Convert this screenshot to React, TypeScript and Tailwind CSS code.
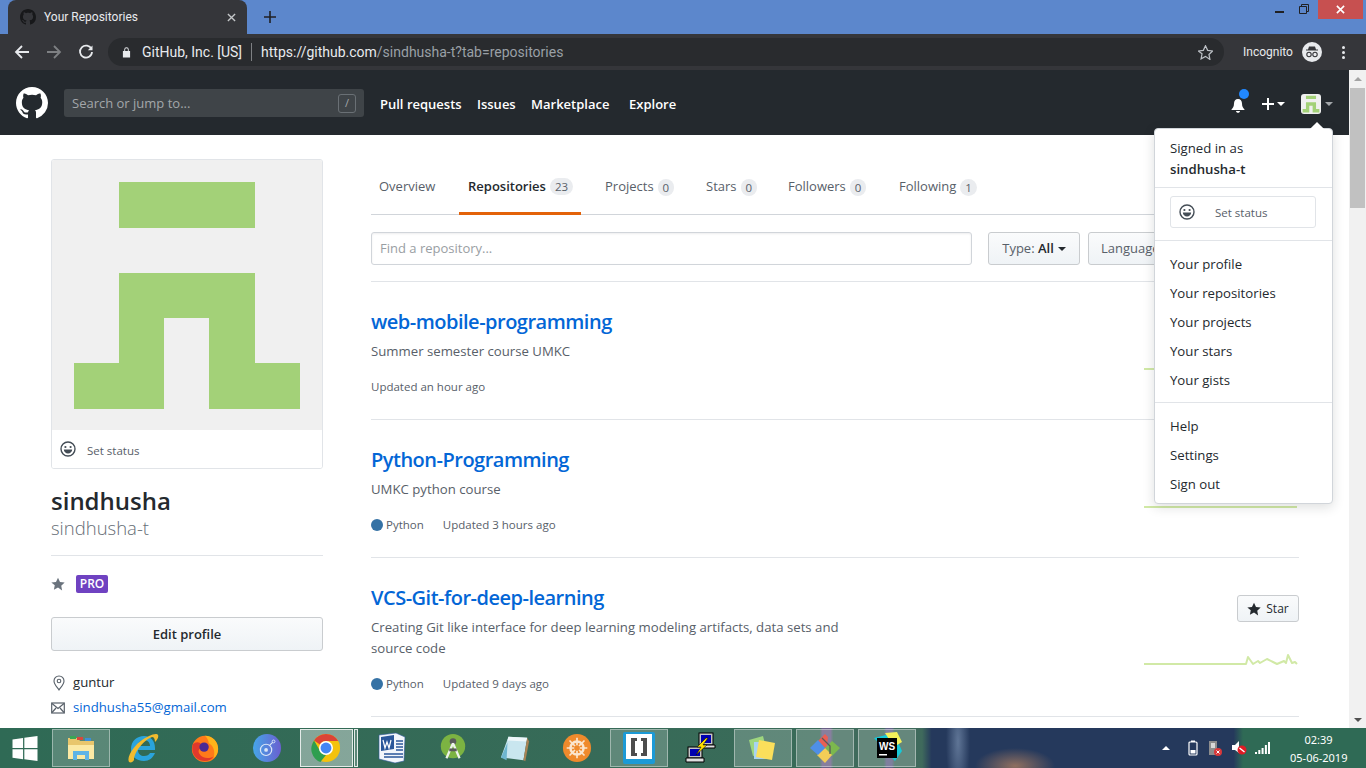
import type { ReactNode } from "react";

const githubMark =
  "M8 0C3.58 0 0 3.58 0 8c0 3.54 2.29 6.53 5.47 7.59.4.07.55-.17.55-.38 0-.19-.01-.82-.01-1.49-2.01.37-2.53-.49-2.69-.94-.09-.23-.48-.94-.82-1.13-.28-.15-.68-.52-.01-.53.63-.01 1.08.58 1.23.82.72 1.21 1.87.87 2.33.66.07-.52.28-.87.51-1.07-1.78-.2-3.64-.89-3.64-3.95 0-.87.31-1.59.82-2.15-.08-.2-.36-1.02.08-2.12 0 0 .67-.21 2.2.82.64-.18 1.32-.27 2-.27.68 0 1.36.09 2 .27 1.53-1.04 2.2-.82 2.2-.82.44 1.1.16 1.92.08 2.12.51.56.82 1.27.82 2.15 0 3.07-1.87 3.75-3.65 3.95.29.25.54.73.54 1.48 0 1.07-.01 1.93-.01 2.2 0 .21.15.46.55.38A8.013 8.013 0 0016 8c0-4.42-3.58-8-8-8z";
const starPath = "M8 .8l2.3 4.9 5.3.7-3.9 3.7 1 5.3L8 12.1l-4.7 2.6 1-5.3L.4 6.4l5.3-.7z";

const GithubMark = ({ className, fill }: { className: string; fill: string }) => (
  <svg viewBox="0 0 16 16" className={className} fill={fill}>
    <path d={githubMark} />
  </svg>
);

const Smiley = ({ className }: { className: string }) => (
  <svg viewBox="0 0 16 16" className={className} fill="none">
    <circle cx="8" cy="8" r="7" stroke="#444d56" strokeWidth="1.4" />
    <circle cx="5.4" cy="6" r="1.1" fill="#444d56" />
    <circle cx="10.6" cy="6" r="1.1" fill="#444d56" />
    <path d="M3.8 8.6h8.4c0 2.4-1.9 3.9-4.2 3.9S3.8 11 3.8 8.6z" fill="#444d56" />
  </svg>
);

const Caret = ({ className }: { className: string }) => (
  <span className={`inline-block w-0 h-0 border-x-[4px] border-x-transparent border-t-[4px] ${className}`} />
);

const Avatar = ({ className }: { className: string }) => (
  <svg viewBox="1 0 270 270" className={className}>
    <rect x="1" width="270" height="270" fill="#f0f0f0" />
    <path
      d="M68 22h136v46H68zM68 113h136v90h45v46h-91v-91h-45v91H23v-46h45z"
      fill="#a3d178"
    />
  </svg>
);

const Sparkline = ({ points, className }: { points: string; className: string }) => (
  <svg viewBox="0 0 155 24" className={`w-[155px] h-[24px] ${className}`} fill="none">
    <polyline points={points} stroke="#d1e9a6" strokeWidth="2" strokeLinejoin="round" />
  </svg>
);

const StarButton = () => (
  <button className="w-[62px] h-[27px] flex items-center justify-center gap-[5px] text-[12px] font-medium text-[#24292e] rounded-[3px] border border-[#c9cccf] bg-gradient-to-b from-[#fafbfc] to-[#eff3f6]">
    <svg viewBox="0 0 16 16" className="w-[14px] h-[14px]" fill="#24292e">
      <path d={starPath} />
    </svg>
    Star
  </button>
);

const tabs = [
  { label: "Overview", width: "w-[73px] pl-[8px]" },
  { label: "Repositories", count: "23", width: "w-[122px] pl-[9px]", active: true },
  { label: "Projects", count: "0", width: "w-[86px] pl-[9px]" },
  { label: "Stars", count: "0", width: "w-[67px] pl-[9px]" },
  { label: "Followers", count: "0", width: "w-[96px] pl-[9px]" },
  { label: "Following", count: "1", width: "w-[96px] pl-[9px]" },
];

const repos = [
  {
    name: "web-mobile-programming",
    desc: ["Summer semester course UMKC"],
    updated: "Updated an hour ago",
    sparkClass: "mt-[1px]",
    points: "0,22 153,22",
  },
  {
    name: "Python-Programming",
    desc: ["UMKC python course"],
    lang: true,
    updated: "Updated 3 hours ago",
    sparkClass: "mt-[1px]",
    points: "0,22 153,22",
  },
  {
    name: "VCS-Git-for-deep-learning",
    desc: [
      "Creating Git like interface for deep learning modeling artifacts, data sets and",
      "source code",
    ],
    lang: true,
    updated: "Updated 9 days ago",
    sparkClass: "mt-[20px]",
    points:
      "0,22 102,22 104,15 109,22 114,19 116,21 123,17 129,20 133,22 140,19 142,21 144,13 148,21 151,20 153,22",
  },
];

const RepoRow = ({ repo }: { repo: (typeof repos)[number] }) => (
  <div className="flex justify-between border-b border-[#e1e4e8] pt-[27px] pb-[23px]">
    <div>
      <div className="text-[20px] leading-[26px] font-semibold text-[#0366d6] tracking-[-0.025em]">
        {repo.name}
      </div>
      <div className="mt-[6px] text-[13.2px] leading-[21px] text-[#586069]">
        {repo.desc.map((line) => (
          <div key={line}>{line}</div>
        ))}
      </div>
      <div className="mt-[16px] flex items-center text-[11.5px] leading-[18px] text-[#586069]">
        {repo.lang && (
          <span className="flex items-center mr-[19px]">
            <span className="w-[12px] h-[12px] rounded-full bg-[#3572a5] mr-[3px]" />
            Python
          </span>
        )}
        {repo.updated}
      </div>
    </div>
    <div className="flex flex-col items-end pt-[10px]">
      <StarButton />
      <Sparkline points={repo.points} className={repo.sparkClass} />
    </div>
  </div>
);

const Sidebar = () => (
  <aside className="w-[272px] shrink-0 -mt-[1px]">
    <div className="rounded-[3px] border border-[#e1e4e8] overflow-hidden">
      <Avatar className="block w-full h-[270px]" />
      <div className="h-[38px] flex items-center px-[8px] pt-[3px] text-[11.5px] text-[#586069] bg-white">
        <Smiley className="w-[16px] h-[16px] mr-[11px] -mt-[3px]" />
        Set status
      </div>
    </div>
    <div className="mt-[17px] text-[24px] leading-[30px] font-semibold text-[#24292e]">sindhusha</div>
    <div className="text-[18.5px] leading-[24px] font-light text-[#666e76]">sindhusha-t</div>
    <div className="mt-[15px] border-t border-[#e1e4e8]" />
    <div className="mt-[19px] h-[18px] flex items-center">
      <svg viewBox="0 0 16 16" className="w-[14px] h-[14px]" fill="#6a737d">
        <path d={starPath} />
      </svg>
      <span className="ml-[11px] w-[32px] h-[18px] flex items-center justify-center rounded-[2px] bg-[#6f42c1] text-white text-[12px] font-semibold">
        PRO
      </span>
    </div>
    <button className="mt-[24px] w-full h-[34px] pt-[1px] text-[13px] font-semibold text-[#24292e] rounded-[3px] border border-[#c9cccf] bg-gradient-to-b from-[#fafbfc] to-[#eff3f6]">
      Edit profile
    </button>
    <div className="mt-[22px] flex items-center h-[20px] text-[13.2px] text-[#24292e]">
      <svg viewBox="0 0 12 16" className="w-[12px] h-[16px] ml-[2px] mr-[8px]" fill="none" stroke="#586069" strokeWidth="1.1">
        <path d="M6 1C3.2 1 1 3.2 1 6c0 3.2 3 6 5 9 2-3 5-5.8 5-9 0-2.8-2.2-5-5-5z" />
        <circle cx="6" cy="6" r="1.8" />
      </svg>
      guntur
    </div>
    <div className="mt-[5px] flex items-center h-[20px] text-[13.2px] text-[#0366d6]">
      <svg viewBox="0 0 14 12" className="w-[14px] h-[12px] mr-[8px]" fill="none" stroke="#586069" strokeWidth="1.2">
        <rect x="0.7" y="1" width="12.6" height="10" />
        <path d="M1 1.5l6 5 6-5M1 10.5l4-4.5M13 10.5L9 6" />
      </svg>
      sindhusha55@gmail.com
    </div>
  </aside>
);

const RepoList = () => (
  <section className="ml-[48px] w-[928px]">
    <nav className="flex h-[55px] border-b border-[#d1d5da] text-[13px] text-[#586069]">
      {tabs.map((tab) => (
        <div
          key={tab.label}
          className={`h-[55px] mr-[15px] flex items-center whitespace-nowrap ${tab.width} ${
            tab.active
              ? "font-semibold text-[#24292e] border-b-[3px] border-[#e36209] pt-[1px]"
              : "pb-[1px]"
          }`}
        >
          {tab.label}
          {tab.count && (
            <span className="ml-[4px] px-[5px] h-[17px] leading-[17px] rounded-full bg-[#eaecef] text-[11.5px] font-normal text-[#586069]">
              {tab.count}
            </span>
          )}
        </div>
      ))}
    </nav>
    <div className="flex mt-[17px] pb-[16px] border-b border-[#e1e4e8]">
      <div className="w-[601px] h-[33px] flex items-center px-[8px] rounded-[3px] border border-[#d1d5da] text-[13px] text-[#999ea3] bg-white shadow-[inset_0_1px_2px_rgba(27,31,35,0.075)]">
        Find a repository...
      </div>
      <button className="ml-[16px] w-[92px] h-[33px] flex items-center justify-center gap-[4px] rounded-[3px] border border-[#c9cccf] bg-gradient-to-b from-[#fafbfc] to-[#eff3f6] text-[13px] text-[#586069]">
        <span>
          Type: <span className="font-semibold text-[#24292e]">All</span>
        </span>
        <Caret className="border-t-[#24292e]" />
      </button>
      <button className="ml-[8px] w-[120px] h-[33px] flex items-center px-[12px] rounded-[3px] border border-[#c9cccf] bg-gradient-to-b from-[#fafbfc] to-[#eff3f6] text-[13px] text-[#586069]">
        Language
      </button>
    </div>
    {repos.map((repo) => (
      <RepoRow key={repo.name} repo={repo} />
    ))}
  </section>
);

const DropdownLink = ({ label }: { label: string }) => (
  <div className="h-[29px] flex items-center px-[15px] text-[13.2px] text-[#24292e]">{label}</div>
);

const ProfileMenu = () => (
  <div className="absolute left-[1154px] top-[128px] w-[179px] h-[376px] rounded-[4px] border border-[#d1d5da] bg-white shadow-[0_3px_12px_rgba(27,31,35,0.15)] z-10">
    <div className="absolute -top-[5px] right-[10px] w-[10px] h-[10px] rotate-45 bg-white" />
    <div className="relative h-[59px] pt-[9px] px-[15px] text-[13.2px] leading-[21px] text-[#24292e] border-b border-[#e1e4e8]">
      <div>Signed in as</div>
      <div className="font-semibold">sindhusha-t</div>
    </div>
    <div className="h-[53px] pt-[8px] px-[15px] border-b border-[#e1e4e8]">
      <div className="w-[146px] h-[32px] flex items-center pl-[8px] pt-[2px] rounded-[3px] border border-[#e1e4e8] text-[11.5px] text-[#586069]">
        <Smiley className="w-[16px] h-[16px] mr-[20px] -mt-[2px]" />
        Set status
      </div>
    </div>
    <div className="pt-[9px] pb-[7px] border-b border-[#e1e4e8]">
      {["Your profile", "Your repositories", "Your projects", "Your stars", "Your gists"].map((label) => (
        <DropdownLink key={label} label={label} />
      ))}
    </div>
    <div className="pt-[9px]">
      {["Help", "Settings", "Sign out"].map((label) => (
        <DropdownLink key={label} label={label} />
      ))}
    </div>
  </div>
);

const GithubHeader = () => (
  <header className="h-[65px] shrink-0 bg-[#24292e] flex items-center pt-[1px] px-[16px]">
    <GithubMark className="w-[32px] h-[32px]" fill="#ffffff" />
    <div className="ml-[16px] w-[300px] h-[28px] flex items-center justify-between px-[8px] pt-[2px] rounded-[3px] bg-[#3f4448] text-[13px] text-[#a3a7aa]">
      Search or jump to...
      <span className="w-[18px] h-[19px] -mt-[2px] flex items-center justify-center rounded-[3px] border border-[#6a7075] text-[11px]">
        /
      </span>
    </div>
    <nav className="ml-[16px] mt-[4px] flex text-[13px] font-semibold text-white">
      <span className="w-[97px]">Pull requests</span>
      <span className="w-[54px]">Issues</span>
      <span className="w-[98px]">Marketplace</span>
      <span>Explore</span>
    </nav>
    <div className="ml-auto mt-[2px] flex items-center">
      <div className="relative w-[14px] h-[16px] mt-[3px] mr-[17px]">
        <svg viewBox="0 0 14 16" className="w-[14px] h-[16px]" fill="#ffffff">
          <path d="M7 1C4.5 1 3 3 3 5.5c0 3-1 4.5-2.5 6v.5h13v-.5C12 10 11 8.5 11 5.5 11 3 9.5 1 7 1zM5 13h4c0 1-1 1.8-2 1.8S5 14 5 13z" />
        </svg>
        <span className="absolute -top-[9px] left-[8px] w-[10px] h-[10px] rounded-full bg-[#2188ff]" />
      </div>
      <svg viewBox="0 0 12 12" className="w-[12px] h-[12px] mr-[3px]" fill="#ffffff">
        <path d="M5 0h2v5h5v2H7v5H5V7H0V5h5z" />
      </svg>
      <Caret className="border-t-white" />
      <Avatar className="ml-[16px] w-[20px] h-[20px] rounded-[3px]" />
      <Caret className="ml-[4px] border-t-[#a3a7aa]" />
    </div>
  </header>
);

const Scrollbar = () => (
  <div className="w-[17px] shrink-0 bg-[#f1f1f1] flex flex-col items-center">
    <div className="mt-[7px] w-0 h-0 border-x-[4px] border-x-transparent border-b-[4px] border-b-[#a3a3a3]" />
    <div className="mt-[7px] w-[15px] h-[120px] bg-[#c1c1c1]" />
    <div className="mt-auto mb-[6px] w-0 h-0 border-x-[4px] border-x-transparent border-t-[4px] border-t-[#505050]" />
  </div>
);

const BrowserChrome = () => (
  <div className="shrink-0">
    <div className="h-[34px] bg-[#5c87cc] flex items-end relative">
      <div className="ml-[8px] w-[239px] h-[34px] rounded-t-[8px] bg-[#35363a] flex items-center pl-[12px] pr-[8px] text-[12px] text-[#e8eaed] font-['Roboto',sans-serif]">
        <GithubMark className="w-[16px] h-[16px]" fill="#17181a" />
        <span className="ml-[8px]">Your Repositories</span>
        <svg viewBox="0 0 10 10" className="ml-auto mr-[3px] w-[9px] h-[9px]" stroke="#c4c7c9" strokeWidth="1.5">
          <path d="M1 1l8 8M9 1L1 9" />
        </svg>
      </div>
      <svg viewBox="0 0 12 12" className="ml-[17px] mb-[11px] w-[12px] h-[12px]" fill="#202124">
        <path d="M5.2 0h1.6v5.2H12v1.6H6.8V12H5.2V6.8H0V5.2h5.2z" />
      </svg>
      <div className="ml-auto self-start flex items-start">
        <span className="mt-[11px] mr-[15px] w-[9px] h-[2px] bg-[#202124]" />
        <svg viewBox="0 0 10 10" className="mt-[4px] mr-[9px] w-[10px] h-[10px]" fill="none" stroke="#202124" strokeWidth="1">
          <path d="M.5 2.5h7v7h-7zM2.5 2.5v-2h7v7h-2" />
        </svg>
        <div className="mr-[3px] w-[45px] h-[19px] bg-[#c75050] flex items-center justify-center">
          <svg viewBox="0 0 10 10" className="w-[9px] h-[9px]" stroke="#ffffff" strokeWidth="1.8">
            <path d="M1 1l8 8M9 1L1 9" />
          </svg>
        </div>
      </div>
    </div>
    <div className="h-[36px] bg-[#35363a] flex items-start font-['Roboto',sans-serif]">
      <svg viewBox="0 0 16 16" className="ml-[14px] mt-[10px] w-[16px] h-[16px]" fill="none" stroke="#e8eaed" strokeWidth="1.8">
        <path d="M15 8H2M8 2L2 8l6 6" />
      </svg>
      <svg viewBox="0 0 16 16" className="ml-[16px] mt-[10px] w-[16px] h-[16px]" fill="none" stroke="#7e8083" strokeWidth="1.8">
        <path d="M1 8h13M8 2l6 6-6 6" />
      </svg>
      <svg viewBox="0 0 16 16" className="ml-[16px] mt-[10px] w-[16px] h-[16px]" fill="none" stroke="#e8eaed" strokeWidth="1.8">
        <path d="M13.5 5.2A6 6 0 1 0 14 8" />
        <path d="M14.5 1.5v4.7H9.8" fill="#e8eaed" stroke="none" />
      </svg>
      <div className="ml-[14px] mt-[4px] w-[1116px] h-[28px] rounded-full bg-[#292b2e] flex items-center pl-[14px] pr-[11px] text-[14px]">
        <svg viewBox="0 0 10 12" className="w-[9px] h-[12px]" fill="#e8eaed">
          <path d="M1 5h8v7H1zM2.5 5V3.2a2.5 2.5 0 0 1 5 0V5h-1V3.2a1.5 1.5 0 0 0-3 0V5z" />
        </svg>
        <span className="ml-[11px] text-[#e8eaed]">GitHub, Inc. [US]</span>
        <span className="ml-[9px] mr-[9px] w-px h-[18px] bg-[#7e8083]" />
        <span className="text-[#9aa0a6]">
          <span className="text-[#e8eaed]">https://github.com</span>/sindhusha-t?tab=repositories
        </span>
        <svg viewBox="0 0 16 16" className="ml-auto w-[15px] h-[15px]" fill="none" stroke="#bdc1c6" strokeWidth="1.3">
          <path d={starPath} />
        </svg>
      </div>
      <span className="ml-[19px] mt-[10px] text-[12px] leading-[16px] text-[#e8eaed]">Incognito</span>
      <span className="ml-[9px] mt-[8px] w-[20px] h-[20px] rounded-full bg-[#e8eaed] flex items-center justify-center">
        <svg viewBox="0 0 16 16" className="w-[16px] h-[16px]" fill="#35363a">
          <path d="M5 2.5h6l1 3h2v1H2v-1h2z" />
          <circle cx="5" cy="10.5" r="2.2" fill="none" stroke="#35363a" strokeWidth="1.1" />
          <circle cx="11" cy="10.5" r="2.2" fill="none" stroke="#35363a" strokeWidth="1.1" />
        </svg>
      </span>
      <span className="ml-[20px] mt-[12px] flex flex-col gap-[2px]">
        <span className="w-[3px] h-[3px] rounded-full bg-[#e8eaed]" />
        <span className="w-[3px] h-[3px] rounded-full bg-[#e8eaed]" />
        <span className="w-[3px] h-[3px] rounded-full bg-[#e8eaed]" />
      </span>
    </div>
  </div>
);

const TaskSlot = ({ boxed, children }: { boxed?: boolean; children: ReactNode }) => (
  <div className="w-[62px] h-[40px] flex items-center justify-center relative">
    {boxed && <div className="absolute inset-y-[1px] inset-x-[2px] border border-white/40 bg-white/20" />}
    <span className="relative">{children}</span>
  </div>
);

const ActiveTaskSlot = ({ children }: { children: ReactNode }) => (
  <div className="w-[62px] h-[40px] flex items-center relative">
    <div className="absolute top-[1px] bottom-[1px] left-[2px] w-[53px] border border-[#e4ebe8] bg-white/40" />
    <div className="absolute top-[1px] bottom-[1px] left-[56px] w-[4px] border border-[#e4ebe8] bg-white/20" />
    <span className="relative ml-[13px]">{children}</span>
  </div>
);

const Taskbar = () => (
  <footer className="h-[40px] shrink-0 flex items-start bg-[radial-gradient(ellipse_40px_18px_at_1015px_38px,#8f6f60_0%,transparent_100%),radial-gradient(ellipse_12px_60px_at_958px_14px,#5f7596_0%,transparent_100%),linear-gradient(90deg,#2f6a55_0%,#3a6b59_60%,#6a5f86_60.2%,#6a5f86_60.8%,#3f6b5c_61%,#3f6b5c_64.7%,#5f5f86_64.9%,#5f5f86_65.3%,#3f6a5c_65.5%,#3f6a5c_67.5%,#25395c_68.2%,#25395c_90.3%,#2f6a55_91%,#2f6a55_100%)]">
    <div className="w-[50px] h-[40px] flex items-center pl-[12px]">
      <svg viewBox="0 0 26 26" className="w-[26px] h-[25px]" fill="#ffffff">
        <path d="M0 3.6l11-1.5v10.4H0zM12.3 1.9L26 0v12.5H12.3zM0 13.8h11v10.4L0 22.6zM12.3 13.8H26V26l-13.7-1.900z" />
      </svg>
    </div>
    <TaskSlot boxed>
      <svg viewBox="0 0 32 32" className="w-[32px] h-[32px]">
        <path d="M3 6h10l2 3h14v18H3z" fill="#e8c66c" />
        <path d="M3 13h26v14H3z" fill="#fbe9a4" />
        <rect x="5" y="4" width="6" height="3" fill="#3aa655" />
        <rect x="12" y="5" width="6" height="3" fill="#d9483b" />
        <rect x="20" y="6" width="6" height="3" fill="#3b8fd9" />
        <path d="M8 28v-9h16v9h-4v-5h-8v5z" fill="#5fb4e6" />
      </svg>
    </TaskSlot>
    <TaskSlot>
      <svg viewBox="0 0 32 32" className="w-[32px] h-[32px]">
        <path d="M4 17C4 9 10 4 17 4c7 0 11 5 11 12v2H11c0 4 3 6 6 6 3 0 5-1 6-3h5c-2 5-6 8-11 8C9 29 4 24 4 17zm7-3h12c0-4-3-6-6-6s-6 2-6 6z" fill="#2aa4dc" />
        <path d="M2 30C-1 25 8 10 22 4c4-2 8-3 9-1 1 2-1 5-3 7 0-3-1-5-3-5C17 8 7 20 7 28c-1 2-3 3-5 2z" fill="#f2bb2e" />
      </svg>
    </TaskSlot>
    <TaskSlot>
      <svg viewBox="0 0 32 32" className="w-[30px] h-[32px]">
        <circle cx="16" cy="17" r="14" fill="#ff7a1a" />
        <path d="M16 3c8 0 14 6 14 14 0 4-2 8-5 10 2-5 1-13-5-16 0-3-2-6-4-8z" fill="#ffb31a" />
        <path d="M3 12c-2 7 1 15 8 17 6 2 12 0 14-4-5 3-12 2-15-3-2-3 0-6 3-6l4-2-3-3-2 1C10 9 6 9 3 12z" fill="#e0392c" />
        <circle cx="15" cy="15" r="5" fill="#4a2a94" />
      </svg>
    </TaskSlot>
    <TaskSlot>
      <svg viewBox="0 0 32 32" className="w-[30px] h-[30px]">
        <defs>
          <linearGradient id="tor" x1="0" x2="1">
            <stop offset="0" stopColor="#46a6e8" />
            <stop offset="1" stopColor="#6a5fd0" />
          </linearGradient>
        </defs>
        <circle cx="16" cy="16" r="15" fill="url(#tor)" />
        <circle cx="15" cy="18" r="6" fill="none" stroke="#dbe6f7" strokeWidth="1.3" />
        <circle cx="15" cy="18" r="2" fill="#dbe6f7" />
        <path d="M19 13l3-3" stroke="#dbe6f7" strokeWidth="1.3" />
        <circle cx="23" cy="9" r="1.5" fill="none" stroke="#dbe6f7" />
      </svg>
    </TaskSlot>
    <ActiveTaskSlot>
      <svg viewBox="0 0 32 32" className="w-[30px] h-[30px]">
        <circle cx="16" cy="16" r="15" fill="#f4c20d" />
        <path d="M16 1a15 15 0 0 1 13 7.5H16a7.5 7.5 0 0 0-6.5 3.7L3.3 8A15 15 0 0 1 16 1z" fill="#db4437" />
        <path d="M3.3 8l6.2 11a7.5 7.5 0 0 0 6.5 4.5L10 31A15 15 0 0 1 3.3 8z" fill="#2f9e4f" />
        <circle cx="16" cy="16" r="7.5" fill="#ffffff" />
        <circle cx="16" cy="16" r="5.8" fill="#4285f4" />
      </svg>
    </ActiveTaskSlot>
    <TaskSlot>
      <svg viewBox="0 0 32 32" className="w-[32px] h-[32px]">
        <path d="M4 3l17-2 9 4-1 24-9 2-16-4z" fill="#f3f6fb" stroke="#2b579a" strokeWidth="0.6" />
        <path d="M6 5l13-2v14L6 19z" fill="#2b579a" />
        <path d="M21 9h7M21 12h7M21 15h7M21 18h7M9 22h19M9 25h19" stroke="#2b579a" strokeWidth="1.3" />
        <path d="M8 8l2 8 2-6 2 6 2-8" fill="none" stroke="#ffffff" strokeWidth="1.2" />
      </svg>
    </TaskSlot>
    <TaskSlot>
      <svg viewBox="0 0 32 32" className="w-[30px] h-[32px]">
        <circle cx="16" cy="14" r="13" fill="#7cb342" />
        <circle cx="16" cy="9" r="3.5" fill="#5a5a5a" />
        <path d="M16 11L9 27M16 11l7 16" stroke="#eef3ea" strokeWidth="2.4" />
        <path d="M12 18h8" stroke="#5a5a5a" strokeWidth="3" />
      </svg>
    </TaskSlot>
    <TaskSlot>
      <svg viewBox="0 0 32 32" className="w-[30px] h-[30px]">
        <path d="M9 4l20 1-4 24-24-3z" fill="#c9e6ef" />
        <path d="M9 4l20 1-1 4-20-1z" fill="#eef7fa" />
        <path d="M29 5l2 4-4 21-2-1z" fill="#a98355" />
        <path d="M1 26l7-16-1 19z" fill="#6fb6cf" />
      </svg>
    </TaskSlot>
    <TaskSlot>
      <svg viewBox="0 0 32 32" className="w-[30px] h-[30px]">
        <circle cx="16" cy="16" r="15" fill="#ef8a2c" />
        <circle cx="16" cy="16" r="7" fill="none" stroke="#fbe6cf" strokeWidth="2.6" />
        <path d="M16 5v22M5 16h22M8 8l16 16M24 8L8 24" stroke="#fbe6cf" strokeWidth="1.8" />
        <circle cx="16" cy="16" r="3" fill="#ef8a2c" />
      </svg>
    </TaskSlot>
    <TaskSlot boxed>
      <svg viewBox="0 0 32 32" className="w-[32px] h-[32px]">
        <rect width="32" height="32" rx="2" fill="#1c9ad6" />
        <rect x="3" y="2" width="26" height="25" fill="#ffffff" />
        <path d="M8 6h6v3h-2v12h2v3H8zM24 6h-6v3h2v12h-2v3h6z" fill="#4d4d4d" />
      </svg>
    </TaskSlot>
    <TaskSlot>
      <svg viewBox="0 0 32 32" className="w-[32px] h-[32px]">
        <rect x="14" y="1" width="14" height="12" fill="#c5c5c5" stroke="#000000" />
        <rect x="16" y="3" width="10" height="8" fill="#0000b0" />
        <path d="M14 13h16v3H14z" fill="#e0e0e0" stroke="#000000" />
        <rect x="3" y="15" width="14" height="11" fill="#c5c5c5" stroke="#000000" />
        <rect x="5" y="17" width="10" height="7" fill="#0000b0" />
        <path d="M1 26h18v4H1z" fill="#e0e0e0" stroke="#000000" />
        <path d="M21 6l-9 9 4 0-5 8 11-10-4 0 5-7z" fill="#ffe000" stroke="#000000" strokeWidth="0.5" />
      </svg>
    </TaskSlot>
    <TaskSlot boxed>
      <svg viewBox="0 0 32 32" className="w-[32px] h-[32px]">
        <path d="M2 8l14-4 4 16-14 4z" fill="#9ed67e" />
        <path d="M7 10h16v17H7z" fill="#a9d4f2" />
        <path d="M12 8l16 3-3 17-16-3z" fill="#fbdf5b" />
      </svg>
    </TaskSlot>
    <TaskSlot boxed>
      <svg viewBox="0 0 32 32" className="w-[32px] h-[32px]">
        <path d="M16 16L9 9l7-7 3 3-1 9z" fill="#e95f55" />
        <path d="M16 16l7-7 8 7-8 8z" fill="#7cb84e" />
        <path d="M16 16l7 7-7 8-8-8z" fill="#f3cd57" />
        <path d="M16 16l-7 7-8-7 8-8z" fill="#4f8fe6" />
        <path d="M13 6l8 8v8" stroke="#5a5a5a" strokeWidth="1.3" fill="none" />
      </svg>
    </TaskSlot>
    <TaskSlot boxed>
      <svg viewBox="0 0 32 32" className="w-[32px] h-[32px]">
        <path d="M3 6l20-5 8 18-7 10z" fill="#16c9d8" />
        <path d="M14 1l12-1 5 10-8 5z" fill="#f4f05a" />
        <rect x="6" y="6" width="20" height="20" fill="#000000" />
        <text x="8" y="18" fontSize="10" fontWeight="700" fill="#ffffff" fontFamily="Liberation Sans, sans-serif">WS</text>
        <rect x="8" y="22" width="8" height="1.5" fill="#ffffff" />
      </svg>
    </TaskSlot>
    <div className="ml-auto flex items-center h-[40px] font-['Noto_Sans',sans-serif] text-white">
      <span className="w-0 h-0 border-x-[4px] border-x-transparent border-b-[4px] border-b-white mr-[18px]" />
      <svg viewBox="0 0 10 16" className="w-[10px] h-[16px] mr-[10px]" fill="none">
        <rect x="1" y="2" width="8" height="13" rx="1" stroke="#ffffff" strokeWidth="1.2" />
        <rect x="3" y="0.5" width="4" height="1.5" fill="#ffffff" />
        <rect x="2.5" y="10" width="5" height="3.5" fill="#ffffff" />
      </svg>
      <svg viewBox="0 0 14 16" className="w-[14px] h-[16px] mr-[10px]">
        <rect x="1" y="1" width="8" height="14" fill="#8d8d8d" />
        <rect x="3" y="3" width="4" height="5" fill="#d8d8d8" />
        <circle cx="10" cy="12" r="4" fill="#d9383a" />
        <path d="M8.5 10.5l3 3M11.5 10.5l-3 3" stroke="#ffffff" />
      </svg>
      <svg viewBox="0 0 16 14" className="w-[16px] h-[14px] mr-[7px]">
        <path d="M0 4h3l4-4v12L3 9H0z" fill="#ffffff" />
        <circle cx="10" cy="9" r="4.5" fill="#e01b24" />
        <path d="M7.5 7l5 4" stroke="#ffffff" strokeWidth="1.5" />
      </svg>
      <svg viewBox="0 0 15 12" className="w-[15px] h-[12px] mr-[20px]" fill="#ffffff">
        <path d="M0 10h2v2H0zM3.3 8h2v4h-2zM6.6 6h2v6h-2zM9.9 3h2v9h-2zM13 0h2v12h-2z" />
      </svg>
      <div className="w-[57px] mr-[19px] mt-[2px] text-[11px] leading-[18px] text-center whitespace-nowrap">
        <div>02:39</div>
        <div>05-06-2019</div>
      </div>
    </div>
  </footer>
);

export default function App() {
  return (
    <div className="relative w-[1366px] h-[768px] overflow-hidden flex flex-col bg-white font-['Open_Sans',sans-serif]">
      <BrowserChrome />
      <div className="flex h-[658px] shrink-0">
        <div className="w-[1349px] flex flex-col overflow-hidden">
          <GithubHeader />
          <main className="flex pt-[25px] pl-[51px]">
            <Sidebar />
            <RepoList />
          </main>
        </div>
        <Scrollbar />
      </div>
      <ProfileMenu />
      <Taskbar />
    </div>
  );
}
